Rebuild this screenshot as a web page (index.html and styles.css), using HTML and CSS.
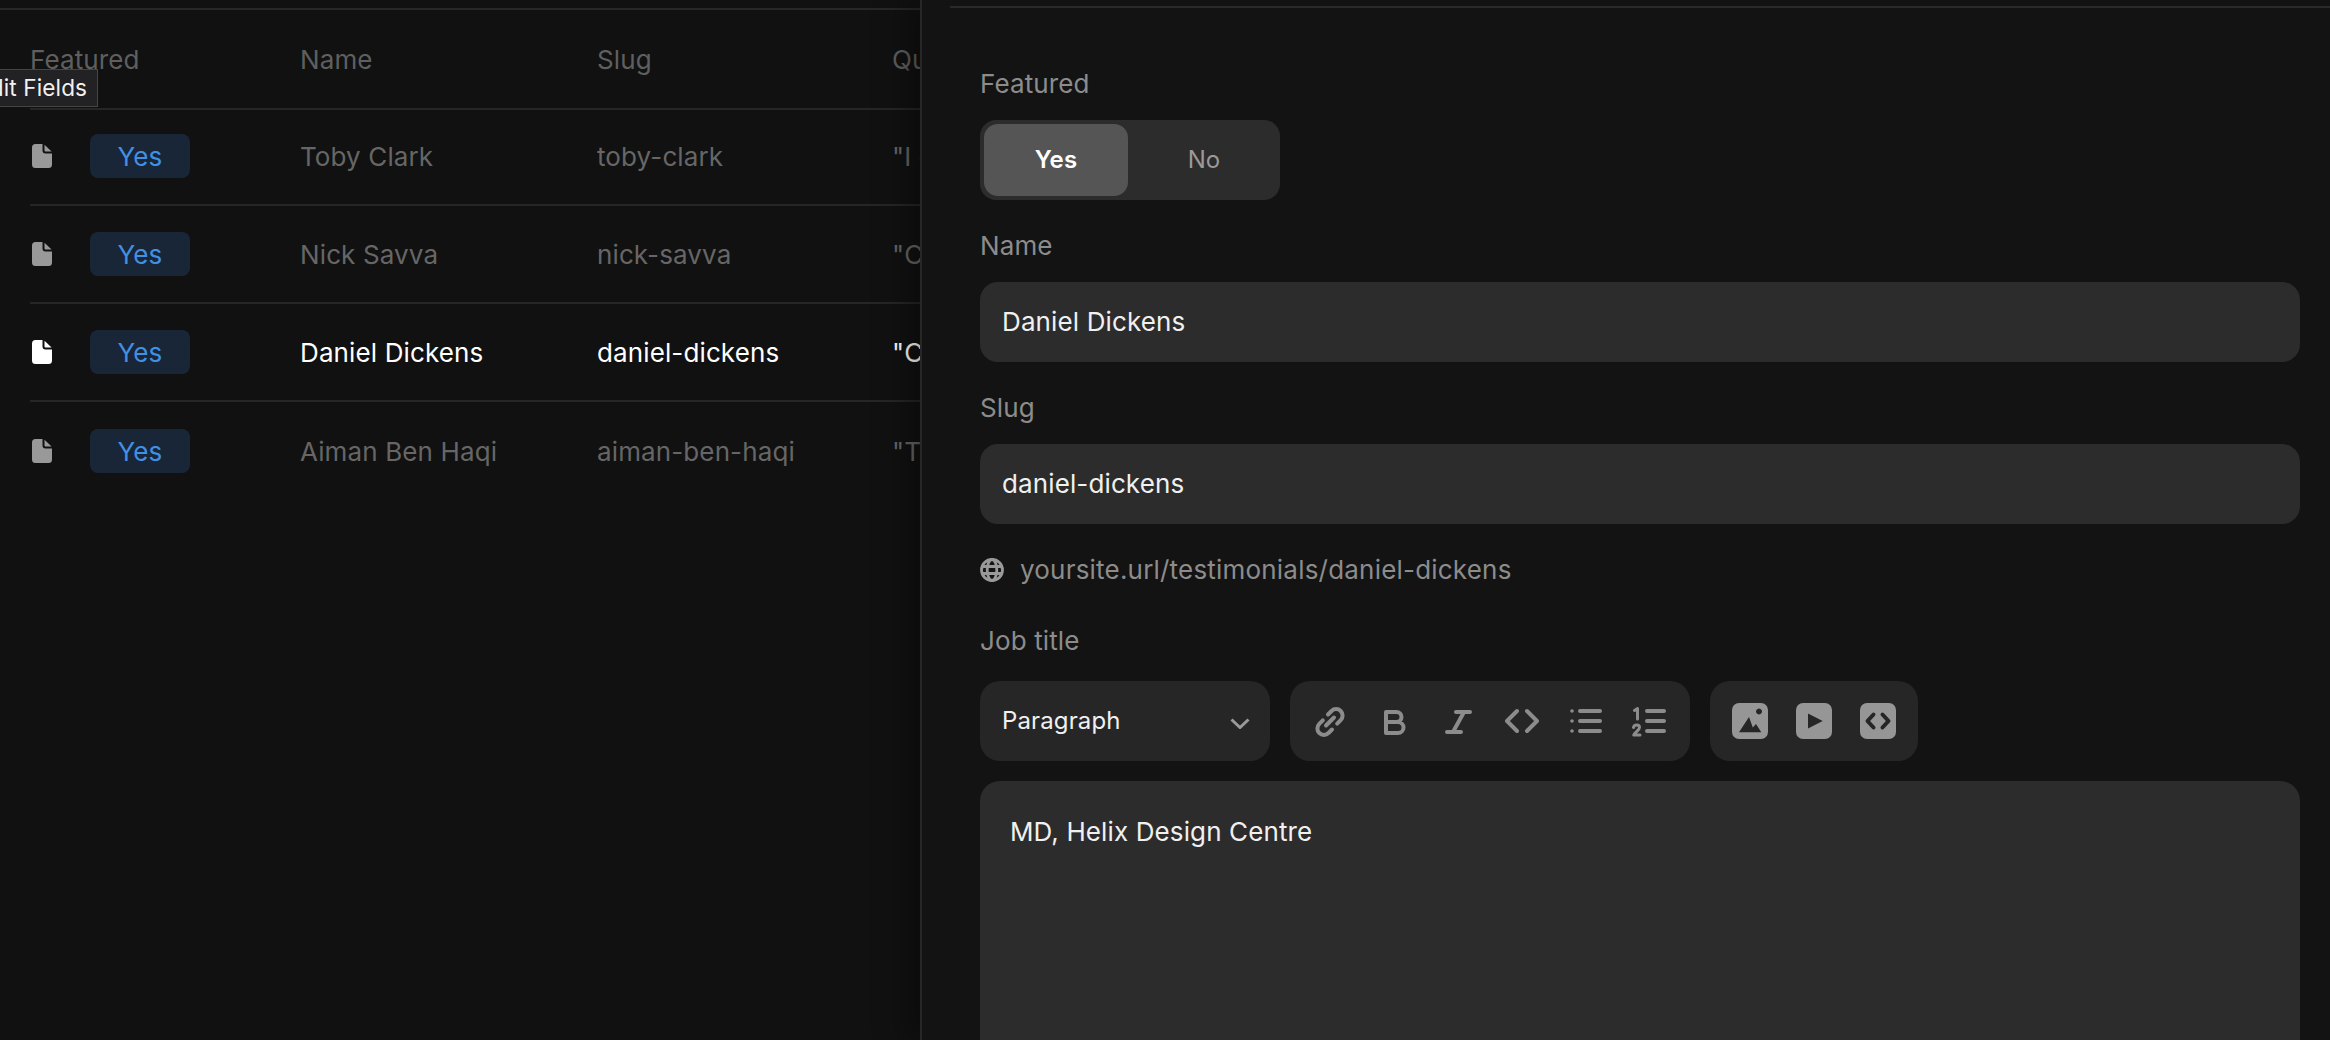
FILE: index.html
```html
<!DOCTYPE html>
<html lang="en">
<head>
<meta charset="utf-8">
<title>Testimonials</title>
<link rel="stylesheet" href="styles.css">
</head>
<body>
<svg class="defs" width="0" height="0" aria-hidden="true">
  <symbol id="doc" viewBox="0 0 20 24">
    <path d="M3.5 0H10.5V6.5a3 3 0 0 0 3 3H20V20.5a3.5 3.5 0 0 1-3.5 3.5H3.5A3.5 3.5 0 0 1 0 20.5V3.5A3.5 3.5 0 0 1 3.5 0Z"/>
    <path d="M12.5 .8 19.6 7.5H13.5a1 1 0 0 1-1-1Z"/>
  </symbol>
</svg>
<div class="app">
  <section class="list">
    <div class="list-top"></div>
    <div class="table">
      <div class="row head">
        <span>Featured</span><span>Name</span><span>Slug</span><span>Quote</span>
      </div>
      <div class="row first">
        <span class="flag"><svg class="doc"><use href="#doc"/></svg><b class="badge">Yes</b></span>
        <span>Toby Clark</span><span>toby-clark</span><span>"I c</span>
      </div>
      <div class="row">
        <span class="flag"><svg class="doc"><use href="#doc"/></svg><b class="badge">Yes</b></span>
        <span>Nick Savva</span><span>nick-savva</span><span>"C</span>
      </div>
      <div class="row active">
        <span class="flag"><svg class="doc"><use href="#doc"/></svg><b class="badge">Yes</b></span>
        <span>Daniel Dickens</span><span>daniel-dickens</span><span>"C</span>
      </div>
      <div class="row last">
        <span class="flag"><svg class="doc"><use href="#doc"/></svg><b class="badge">Yes</b></span>
        <span>Aiman Ben Haqi</span><span>aiman-ben-haqi</span><span>"T</span>
      </div>
    </div>
    <div class="tooltip">Edit Fields</div>
  </section>

  <section class="panel">
    <div class="panel-top"></div>
    <form class="form">
      <div class="label">Featured</div>
      <div class="toggle"><span class="opt on">Yes</span><span class="opt off">No</span></div>

      <div class="label after-toggle">Name</div>
      <div class="input">Daniel Dickens</div>

      <div class="label after-input">Slug</div>
      <div class="input">daniel-dickens</div>

      <div class="url">
        <svg class="globe" viewBox="0 0 24 24"><circle cx="12" cy="12" r="10.5"/><ellipse cx="12" cy="12" rx="4.8" ry="10.5"/><path d="M2 8.5H22M2 15.5H22"/></svg>
        <span>yoursite.url/testimonials/daniel-dickens</span>
      </div>

      <div class="label after-url">Job title</div>
      <div class="toolbar">
        <div class="tool select"><span>Paragraph</span>
          <svg class="chev" viewBox="0 0 20 11"><path d="M1.5 1.5 10 9.5 18.5 1.5"/></svg>
        </div>
        <div class="tool group">
          <svg class="ico" viewBox="0 0 36 36"><path d="M16 11.5l3.5-3.5a6.5 6.5 0 0 1 9.2 9.2l-3.5 3.5M20 26.5l-3.5 3.5a6.5 6.5 0 0 1-9.2-9.2l3.5-3.5M14 22.5 22 14.5"/></svg>
          <svg class="ico" viewBox="0 0 36 36"><path d="M10 9H20.500a5 5 0 0 1 0 10H10ZM10 19H22a5.500 5.500 0 0 1 0 11H10Z"/></svg>
          <svg class="ico" viewBox="0 0 36 36"><path d="M16 9H30M7 29H21M24 9 13 29"/></svg>
          <svg class="ico" viewBox="0 0 36 36"><path d="M13 8 3 18 13 28M23 8 33 18 23 28"/></svg>
          <svg class="ico" viewBox="0 0 36 36"><path d="M12 8H32M12 18H32M12 28H32"/><path class="dot" d="M4 8h.01M4 18h.01M4 28h.01"/></svg>
          <svg class="ico ord" viewBox="0 0 36 36"><path d="M15 8H32M15 18H32M15 28H32"/><path class="num" d="M2.500 7.500 5.500 5.500V16M1.500 24.500C2 21 7.500 21 7.500 24.500 7.500 27 3 29 1.800 32H8"/></svg>
        </div>
        <div class="tool group">
          <svg class="ico solid" viewBox="0 0 36 36"><path fill-rule="evenodd" d="M7 0H29a7 7 0 0 1 7 7V29a7 7 0 0 1-7 7H7a7 7 0 0 1-7-7V7a7 7 0 0 1 7-7ZM27 5.500a3 3 0 1 0 .01 0ZM17 14 7 29.300H29.300L24 21 20.800 24.500Z"/></svg>
          <svg class="ico solid" viewBox="0 0 36 36"><path fill-rule="evenodd" d="M7 0H29a7 7 0 0 1 7 7V29a7 7 0 0 1-7 7H7a7 7 0 0 1-7-7V7a7 7 0 0 1 7-7ZM12 10.500V25.500L26.700 18Z"/></svg>
          <svg class="ico solid-code" viewBox="0 0 36 36"><rect width="36" height="36" rx="7"/><path d="M13.500 11.500 7.500 18 13.500 24.500M22.500 11.500 28.500 18 22.500 24.500"/></svg>
        </div>
      </div>
      <div class="editor">MD, Helix Design Centre</div>
    </form>
  </section>
</div>
</body>
</html>
```

FILE: styles.css
```css
* { box-sizing: border-box; }
html, body { margin: 0; height: 100%; overflow: hidden; }
body {
  background: #111111;
  font-family: Inter, "Liberation Sans", sans-serif;
  font-size: 26px;
  line-height: 36px;
  letter-spacing: .12px;
  color: #fff;
}
.defs { position: absolute; }
.app { display: flex; height: 1040px; }

/* left list */
.list { position: relative; flex: 0 0 920px; overflow: hidden; background: #111111; }
.list-top { height: 2px; margin-top: 8px; background: #272727; }
.table { margin-left: 30px; }
.row {
  display: grid;
  grid-template-columns: 271px 296px 296px 60px;
  align-items: center;
  height: 98px;
  border-bottom: 2px solid #262626;
  color: #666666;
  white-space: nowrap;
}
.row > span:not(.flag) { padding-top: 2px; margin-left: -1px; }
.row > span:nth-child(1):not(.flag) { margin-left: 0; }
.row > span:nth-child(3) { margin-left: 0; }
.row.head { height: 100px; color: #5f5f5f; }
.row.first { height: 96px; padding-bottom: 2px; }
.row.last { height: 98px; border-bottom: 0; }
.row.active { color: #ffffff; }
.flag { display: flex; align-items: center; padding-left: 2px; }
.doc { width: 20px; height: 24px; fill: #999999; flex: none; }
.active .doc { fill: #ffffff; }
.badge {
  margin-left: 38px;
  width: 100px;
  height: 44px;
  line-height: 46px;
  text-align: center;
  font-weight: 400;
  color: #4190e4;
  background: #182638;
  border-radius: 8px;
}
.tooltip {
  position: absolute;
  left: -35px;
  top: 69px;
  height: 38px;
  padding: 0 10px;
  line-height: 35px;
  font-size: 22.600px;
  color: #f2f2f2;
  background: #222124;
  border: 1px solid #454545;
  white-space: nowrap;
}

/* right panel */
.panel {
  flex: 1;
  min-width: 0;
  background: #131313;
  border-left: 2px solid #272727;
  box-shadow: -14px 0 30px rgba(0, 0, 0, .35);
  z-index: 1;
}
.panel-top { height: 2px; margin: 6px 0 0 28px; background: #2a2a2a; }
.form { padding: 58px 30px 0 58px; }
.label { height: 36px; color: #8c8c8c; margin-bottom: 18px; }
.after-toggle { margin-top: 28px; }
.after-input { margin-top: 28px; }
.after-url { margin-top: 35px; margin-bottom: 22px; }

.toggle {
  display: flex;
  width: 300px;
  height: 80px;
  padding: 4px 0 4px 4px;
  background: #2c2c2c;
  border-radius: 16px;
  font-size: 24px;
}
.opt { display: flex; align-items: center; justify-content: center; }
.opt.on { width: 144px; background: #555555; border-radius: 14px; font-weight: 600; color: #fff; }
.opt.off { flex: 1; color: #999999; }

.input {
  display: flex;
  align-items: center;
  height: 80px;
  padding: 0 22px;
  background: #2c2c2c;
  border-radius: 18px;
  color: #f0f0f0;
}
.url { display: flex; align-items: center; gap: 16px; height: 36px; margin-top: 28px; color: #8c8c8c; letter-spacing: .2px; }
.globe { width: 24px; height: 24px; fill: none; stroke: #999999; stroke-width: 2.800; flex: none; }

.toolbar { display: flex; gap: 20px; height: 80px; }
.tool { display: flex; align-items: center; background: #262626; border-radius: 20px; }
.select {
  width: 290px;
  padding: 0 20px 0 22px;
  justify-content: space-between;
  font-size: 24px;
  color: #f0f0f0;
}
.chev { width: 20px; height: 11px; fill: none; stroke: #999999; stroke-width: 3; margin-top: 4px; }
.group { padding: 0 22px; gap: 28px; }
.ico { width: 36px; height: 36px; fill: none; stroke: #8c8c8c; stroke-width: 4; stroke-linecap: round; stroke-linejoin: round; flex: none; }
.dot { stroke-width: 3.600; }
.num { stroke-width: 3; }
.solid { fill: #969696; stroke: none; }
.solid-code { fill: #969696; stroke: none; }
.solid-code path { fill: none; stroke: #262626; stroke-width: 4; }

.editor {
  height: 300px;
  margin-top: 20px;
  padding: 33px 30px;
  background: #2c2c2c;
  border-radius: 20px;
  color: #f0f0f0;
}
```
